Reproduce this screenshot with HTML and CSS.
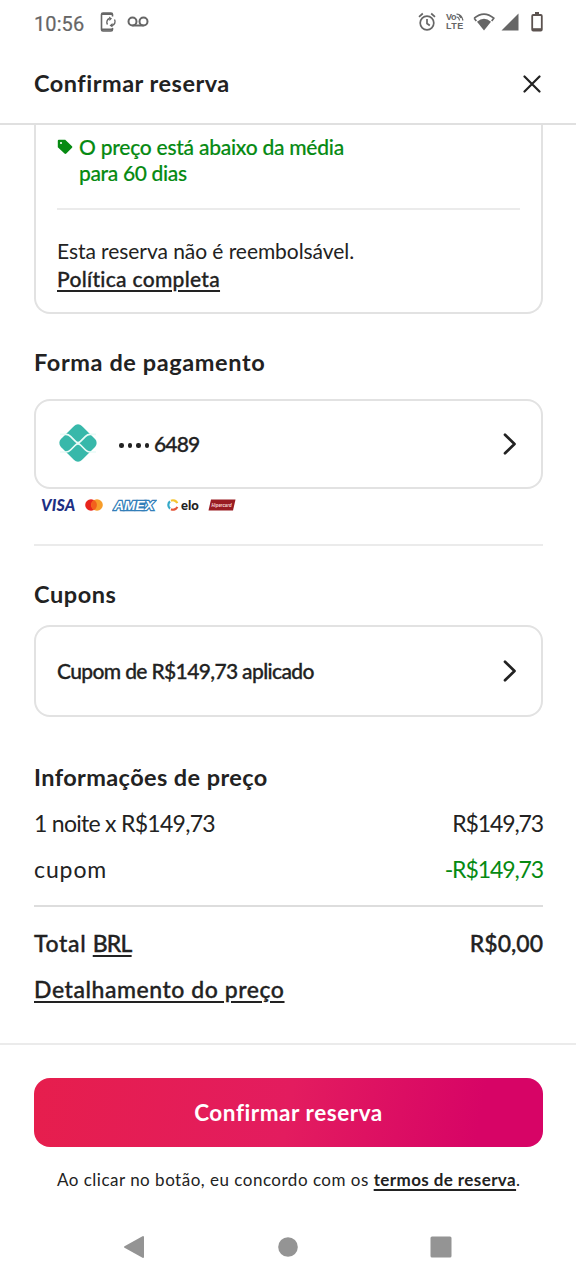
FILE: index.html
```html
<!DOCTYPE html>
<html lang="pt-BR">
<head>
<meta charset="utf-8">
<title>Confirmar reserva</title>
<link rel="stylesheet" href="styles.css">
</head>
<body>
<div class="status">
  <span class="clock">10:56</span>
  <svg class="ic-sync" width="18" height="20" viewBox="0 0 18 20" fill="none" stroke="#666" stroke-width="1.6"><path d="M12.500 4.500V2.500Q12.500 1 11 1H3Q1.500 1 1.500 2.500V17.500Q1.500 19 3 19H11Q12.500 19 12.500 17.500V16"/><path d="M2 2H12M2 17.500H12" stroke-width="2"/><path d="M7.500 12.500A4 4 0 0 1 9.500 6.500M14.500 7.500A4 4 0 0 1 12 13.500" stroke-width="1.400"/><path d="M9 4.500L12 6.500L9.500 9ZM12.500 11L9.500 13.500L12.500 15.500Z" fill="#666" stroke="none"/></svg>
  <svg class="ic-voicemail" width="22" height="12" viewBox="0 0 22 12" fill="none" stroke="#666" stroke-width="2"><circle cx="5.500" cy="5.500" r="4"/><circle cx="16.500" cy="5.500" r="4"/><path d="M5.500 9.500H16.500"/></svg>
  <span class="grow"></span>
  <svg class="ic-alarm" width="18" height="20" viewBox="0 0 18 20" fill="none" stroke="#666" stroke-width="1.700"><circle cx="9" cy="11" r="6.800"/><path d="M9 7V11.500L11.800 13.500M1 4.800L4.800 1.500M17 4.800L13.200 1.500"/></svg>
  <div class="volte"><span class="vo">Vo<svg width="8" height="8" viewBox="0 0 8 8" fill="none" stroke="#666" stroke-width="1.200"><path d="M.5 4Q3 4 3.500 7.500M.5 1.200Q5.500 1 7 7.500M3 2.500L5 5"/></svg></span><span>LTE</span></div>
  <svg class="ic-wifi" width="22" height="18" viewBox="0 0 22 18"><path d="M1.200 5.200Q11-3 20.800 5.200L18.700 8" fill="none" stroke="#666" stroke-width="1.700"/><path d="M1.200 5.200L3.300 8" stroke="#666" stroke-width="1.700"/><path d="M4 8.800Q11 2.600 18 8.800L11 17.500Z" fill="#666"/></svg>
  <svg class="ic-signal" width="18" height="18" viewBox="0 0 18 18"><path d="M17.500 .5V17.500H.5Z" fill="#666"/></svg>
  <svg class="ic-battery" width="12" height="20" viewBox="0 0 12 20"><path d="M4 0H8V2.500H4Z" fill="#5c5350"/><rect x="1.200" y="3" width="9.600" height="15.500" rx="1" fill="none" stroke="#5c5350" stroke-width="1.800"/><path d="M1 16.200H11V19H1Z" fill="#5c5350"/></svg>
</div>

<header class="header">
  <h1 class="title">Confirmar reserva</h1>
  <svg class="close" width="18" height="18" viewBox="0 0 18 18" fill="none" stroke="#222" stroke-width="2.200" stroke-linecap="round"><path d="M1.500 1.500L16.500 16.500M16.500 1.500L1.500 16.500"/></svg>
</header>

<main class="content">
  <section class="summary">
    <div class="deal">
      <svg class="tag" width="16" height="16" viewBox="0 0 16 16"><path d="M1.800 .8H8.200L15 7.200Q15.800 8 15 8.800L9.300 14.600Q8.400 15.400 7.500 14.600L.8 8.200V1.800Q.8 .8 1.800 .8Z" fill="#068a12"/><circle cx="4" cy="4" r="1" fill="#fff"/></svg>
      <p class="deal-text"><span class="deal-a">O preço está abaixo da média</span><br><span class="deal-b">para 60 dias</span></p>
    </div>
    <div class="policy">
      <p class="refund">Esta reserva não é reembolsável.</p>
      <a class="policy-link">Política completa</a>
    </div>
  </section>

  <section class="payment">
    <h2 class="heading h-payment">Forma de pagamento</h2>
    <div class="option option-pay">
      <svg class="pix" width="40" height="40" viewBox="0 0 40 40"><rect x="5.200" y="5.200" width="29.600" height="29.600" rx="5.500" transform="rotate(45 20 20)" fill="#38b8aa"/><path d="M2 11.300H8Q10.500 11.300 12.500 13.300L17.500 18.300Q20 20.800 22.500 18.300L27.500 13.300Q29.500 11.300 32 11.300H38M2 29H8Q10.500 29 12.500 27L17.500 22Q20 19.500 22.500 22L27.500 27Q29.500 29 32 29H38" fill="none" stroke="#e9fbf7" stroke-width="1.700"/></svg>
      <span class="mask"><i></i><i></i><i></i><i></i></span>
      <span class="digits">6489</span>
      <svg class="chevron" width="14" height="22" viewBox="0 0 14 22" fill="none" stroke="#222" stroke-width="2.700" stroke-linecap="round" stroke-linejoin="round"><path d="M2 1.800L11.500 11L2 20.200"/></svg>
    </div>
    <div class="brands">
      <span class="visa">VISA</span>
      <svg class="mc" width="18" height="12" viewBox="0 0 18 12"><circle cx="6" cy="6" r="5.800" fill="#e8241c"/><circle cx="12" cy="6" r="5.800" fill="#f79d2a"/><path d="M9 1A5.800 5.800 0 0 1 9 11A5.800 5.800 0 0 1 9 1Z" fill="#f2601d"/></svg>
      <svg class="amex" width="45" height="13" viewBox="0 0 45 13"><text x="2" y="11.200" textLength="40" lengthAdjust="spacingAndGlyphs" class="amex-text">AMEX</text></svg>
      <svg class="elo-ring" width="12" height="12" viewBox="0 0 12 12" fill="none" stroke-width="2.200"><path d="M4 1.700A4.700 4.700 0 0 1 10.300 4.200" stroke="#f5c430"/><path d="M3 2.400A4.700 4.700 0 0 0 3 9.600" stroke="#35a9c8"/><path d="M4 10.300A4.700 4.700 0 0 0 10.300 7.800" stroke="#e5563a"/></svg>
      <span class="elo">elo</span>
      <svg class="hiper" width="28" height="12" viewBox="0 0 28 12"><path d="M3 .5H27.500L25 11.500H.5Z" fill="#991c22"/><text x="3.500" y="8" textLength="20" lengthAdjust="spacingAndGlyphs" class="hiper-text">Hipercard</text></svg>
    </div>
  </section>

  <section class="coupons">
    <h2 class="heading h-coupons">Cupons</h2>
    <div class="option option-coupon">
      <span class="coupon-text">Cupom de R$149,73 aplicado</span>
      <svg class="chevron" width="14" height="22" viewBox="0 0 14 22" fill="none" stroke="#222" stroke-width="2.700" stroke-linecap="round" stroke-linejoin="round"><path d="M2 1.800L11.500 11L2 20.200"/></svg>
    </div>
  </section>

  <section class="prices">
    <h2 class="heading h-prices">Informações de preço</h2>
    <div class="row"><span class="night">1 noite x R$149,73</span><span class="amount">R$149,73</span></div>
    <div class="row"><span class="coupon-label">cupom</span><span class="amount discount">-R$149,73</span></div>
    <div class="row total"><span class="total-label">Total <u class="currency">BRL</u></span><span class="total-amount">R$0,00</span></div>
    <div class="row"><a class="details">Detalhamento do preço</a></div>
  </section>
</main>

<footer class="footer">
  <div class="confirm"><span class="confirm-text">Confirmar reserva</span></div>
  <p class="terms"><span class="terms-a">Ao clicar no botão, eu concordo com os </span><a class="terms-b">termos de reserva</a>.</p>
</footer>

<nav class="nav">
  <svg width="22" height="24" viewBox="0 0 22 24"><path d="M20 2V22L2 12Z" fill="#949494" stroke="#949494" stroke-width="2" stroke-linejoin="round"/></svg>
  <svg width="20" height="20" viewBox="0 0 20 20"><circle cx="10" cy="10" r="9.800" fill="#949494"/></svg>
  <svg width="22" height="22" viewBox="0 0 22 22"><rect x=".5" y=".5" width="21" height="21" rx="1.500" fill="#949494"/></svg>
</nav>
</body>
</html>
```
FILE: styles.css
```css
* { box-sizing: border-box; }
body { margin: 0; width: 576px; height: 1280px; overflow: hidden; background: #fff; color: #222; font-family: Lato, "Noto Sans", sans-serif; font-size: 21px; white-space: nowrap; display: flex; flex-direction: column; }
h1, h2, p { margin: 0; }
svg { display: block; flex: none; }
a, u { text-decoration: underline; text-decoration-thickness: 1.500px; text-underline-offset: 3px; }

.status { height: 44px; padding: 0 33px 0 34px; display: flex; align-items: center; color: #666; flex: none; }
.clock { font: 400 20px/24px Roboto, sans-serif; letter-spacing: .1px; width: 66px; padding-top: 3px; -webkit-text-stroke: .2px #666; }
.ic-voicemail { margin-left: 9px; }
.grow { flex: 1; }
.ic-alarm { margin-right: 10px; }
.volte { width: 20px; margin-right: 7px; font: 700 9px/9px "Liberation Sans", sans-serif; letter-spacing: .4px; }
.volte span { display: block; }
.volte .vo { display: flex; letter-spacing: -.3px; }
.ic-signal { margin-left: 6px; }
.ic-battery { margin-left: 12px; }

.header { height: 81px; border-bottom: 2px solid #e0e0e0; padding: 0 35px 0 34px; display: flex; align-items: center; justify-content: space-between; flex: none; }
.title, .heading { font-weight: 700; font-size: 23.500px; line-height: 30px; }
.title { letter-spacing: .5px; margin-top: -2px; }

.content { height: 918px; padding: 0 33px 0 34px; flex: none; }
.summary { height: 189px; border: 2px solid #e2e2e2; border-top: 0; border-radius: 0 0 16px 16px; padding: 9px 21px 0; }
.deal { height: 76px; border-bottom: 2px solid #ebebeb; display: flex; gap: 6px; }
.tag { margin-top: 5px; }
.deal-text { color: #068a12; font-weight: 500; line-height: 26px; -webkit-text-stroke: .15px #068a12; }
.deal-a { letter-spacing: -.25px; }
.deal-b { letter-spacing: -.34px; }
.policy { padding-top: 27px; line-height: 28px; }
.refund { letter-spacing: -.06px; }
.policy-link { display: inline-block; font-weight: 500; letter-spacing: .3px; -webkit-text-stroke: .3px #222; }

.payment { height: 232px; border-bottom: 2px solid #ebebeb; padding-top: 33px; }
.h-payment { letter-spacing: .6px; }
.option { border: 2px solid #e2e2e2; border-radius: 16px; padding: 0 24px 0 21px; display: flex; align-items: center; font-weight: 500; -webkit-text-stroke: .3px #222; }
.option-pay { height: 90px; margin-top: 22px; }
.option-coupon { height: 92px; margin-top: 16px; }
.pix { margin: -2px 0 0 1px; }
.mask { display: flex; gap: 4px; margin: 3px 5px 0 21px; }
.mask i { width: 4.500px; height: 4.500px; border-radius: 50%; background: #222; }
.digits { letter-spacing: -.85px; margin-top: -2px; }
.coupon-text { letter-spacing: -.64px; margin-top: -1px; }
.chevron { margin-left: auto; }
.brands { height: 32px; padding-left: 7px; display: flex; align-items: center; }
.visa { font: italic 900 16px/16px Lato, sans-serif; letter-spacing: .2px; color: #1d2f83; width: 44px; }
.mc { margin-right: 9px; }
.amex { margin-right: 10px; }
.amex-text { font: italic 900 12.500px "Liberation Sans", sans-serif; fill: #fff; stroke: #347fb9; stroke-width: 2.400px; paint-order: stroke; }
.elo { font: 900 13px/14px Lato, sans-serif; width: 29px; padding-left: 2px; }
.hiper { overflow: visible; }
.hiper-text { font: italic 700 5.500px "Liberation Sans", sans-serif; fill: #f6dada; }

.coupons { height: 172px; padding-top: 33px; }
.h-coupons { letter-spacing: .55px; }
.prices { padding-top: 44px; }
.h-prices { margin-bottom: 8px; letter-spacing: .4px; }
.row { height: 46px; display: flex; align-items: center; justify-content: space-between; font-size: 23px; }
.night { letter-spacing: -.72px; }
.coupon-label { letter-spacing: .9px; }
.amount { letter-spacing: -1.100px; margin-right: 0; }
.discount { color: #068a12; }
.total { height: 61px; border-top: 2px solid #ddd; margin-top: 13px; padding-top: 13px; }
.total, .details { font-weight: 500; -webkit-text-stroke: .35px #222; }
.total-label { letter-spacing: .65px; }
.currency { letter-spacing: -.8px; }
.details { letter-spacing: .55px; }

.footer { height: 168px; border-top: 2px solid #ebebeb; padding: 33px 33px 0 34px; flex: none; }
.confirm { height: 69px; border-radius: 16px; background: linear-gradient(100deg, #e61e4d 0%, #e31c5f 50%, #d70466 87%, #d70466 100%); display: flex; align-items: center; justify-content: center; color: #fff; font-weight: 700; font-size: 22.500px; }
.confirm-text { letter-spacing: .55px; }
.terms { margin-top: 20px; text-align: center; font-size: 17px; line-height: 26px; }
.terms-a { letter-spacing: .5px; }
.terms-b { font-weight: 700; letter-spacing: .4px; }
.nav { height: 69px; padding: 3px 124px 0 123px; display: flex; align-items: center; justify-content: space-between; flex: none; }
```
